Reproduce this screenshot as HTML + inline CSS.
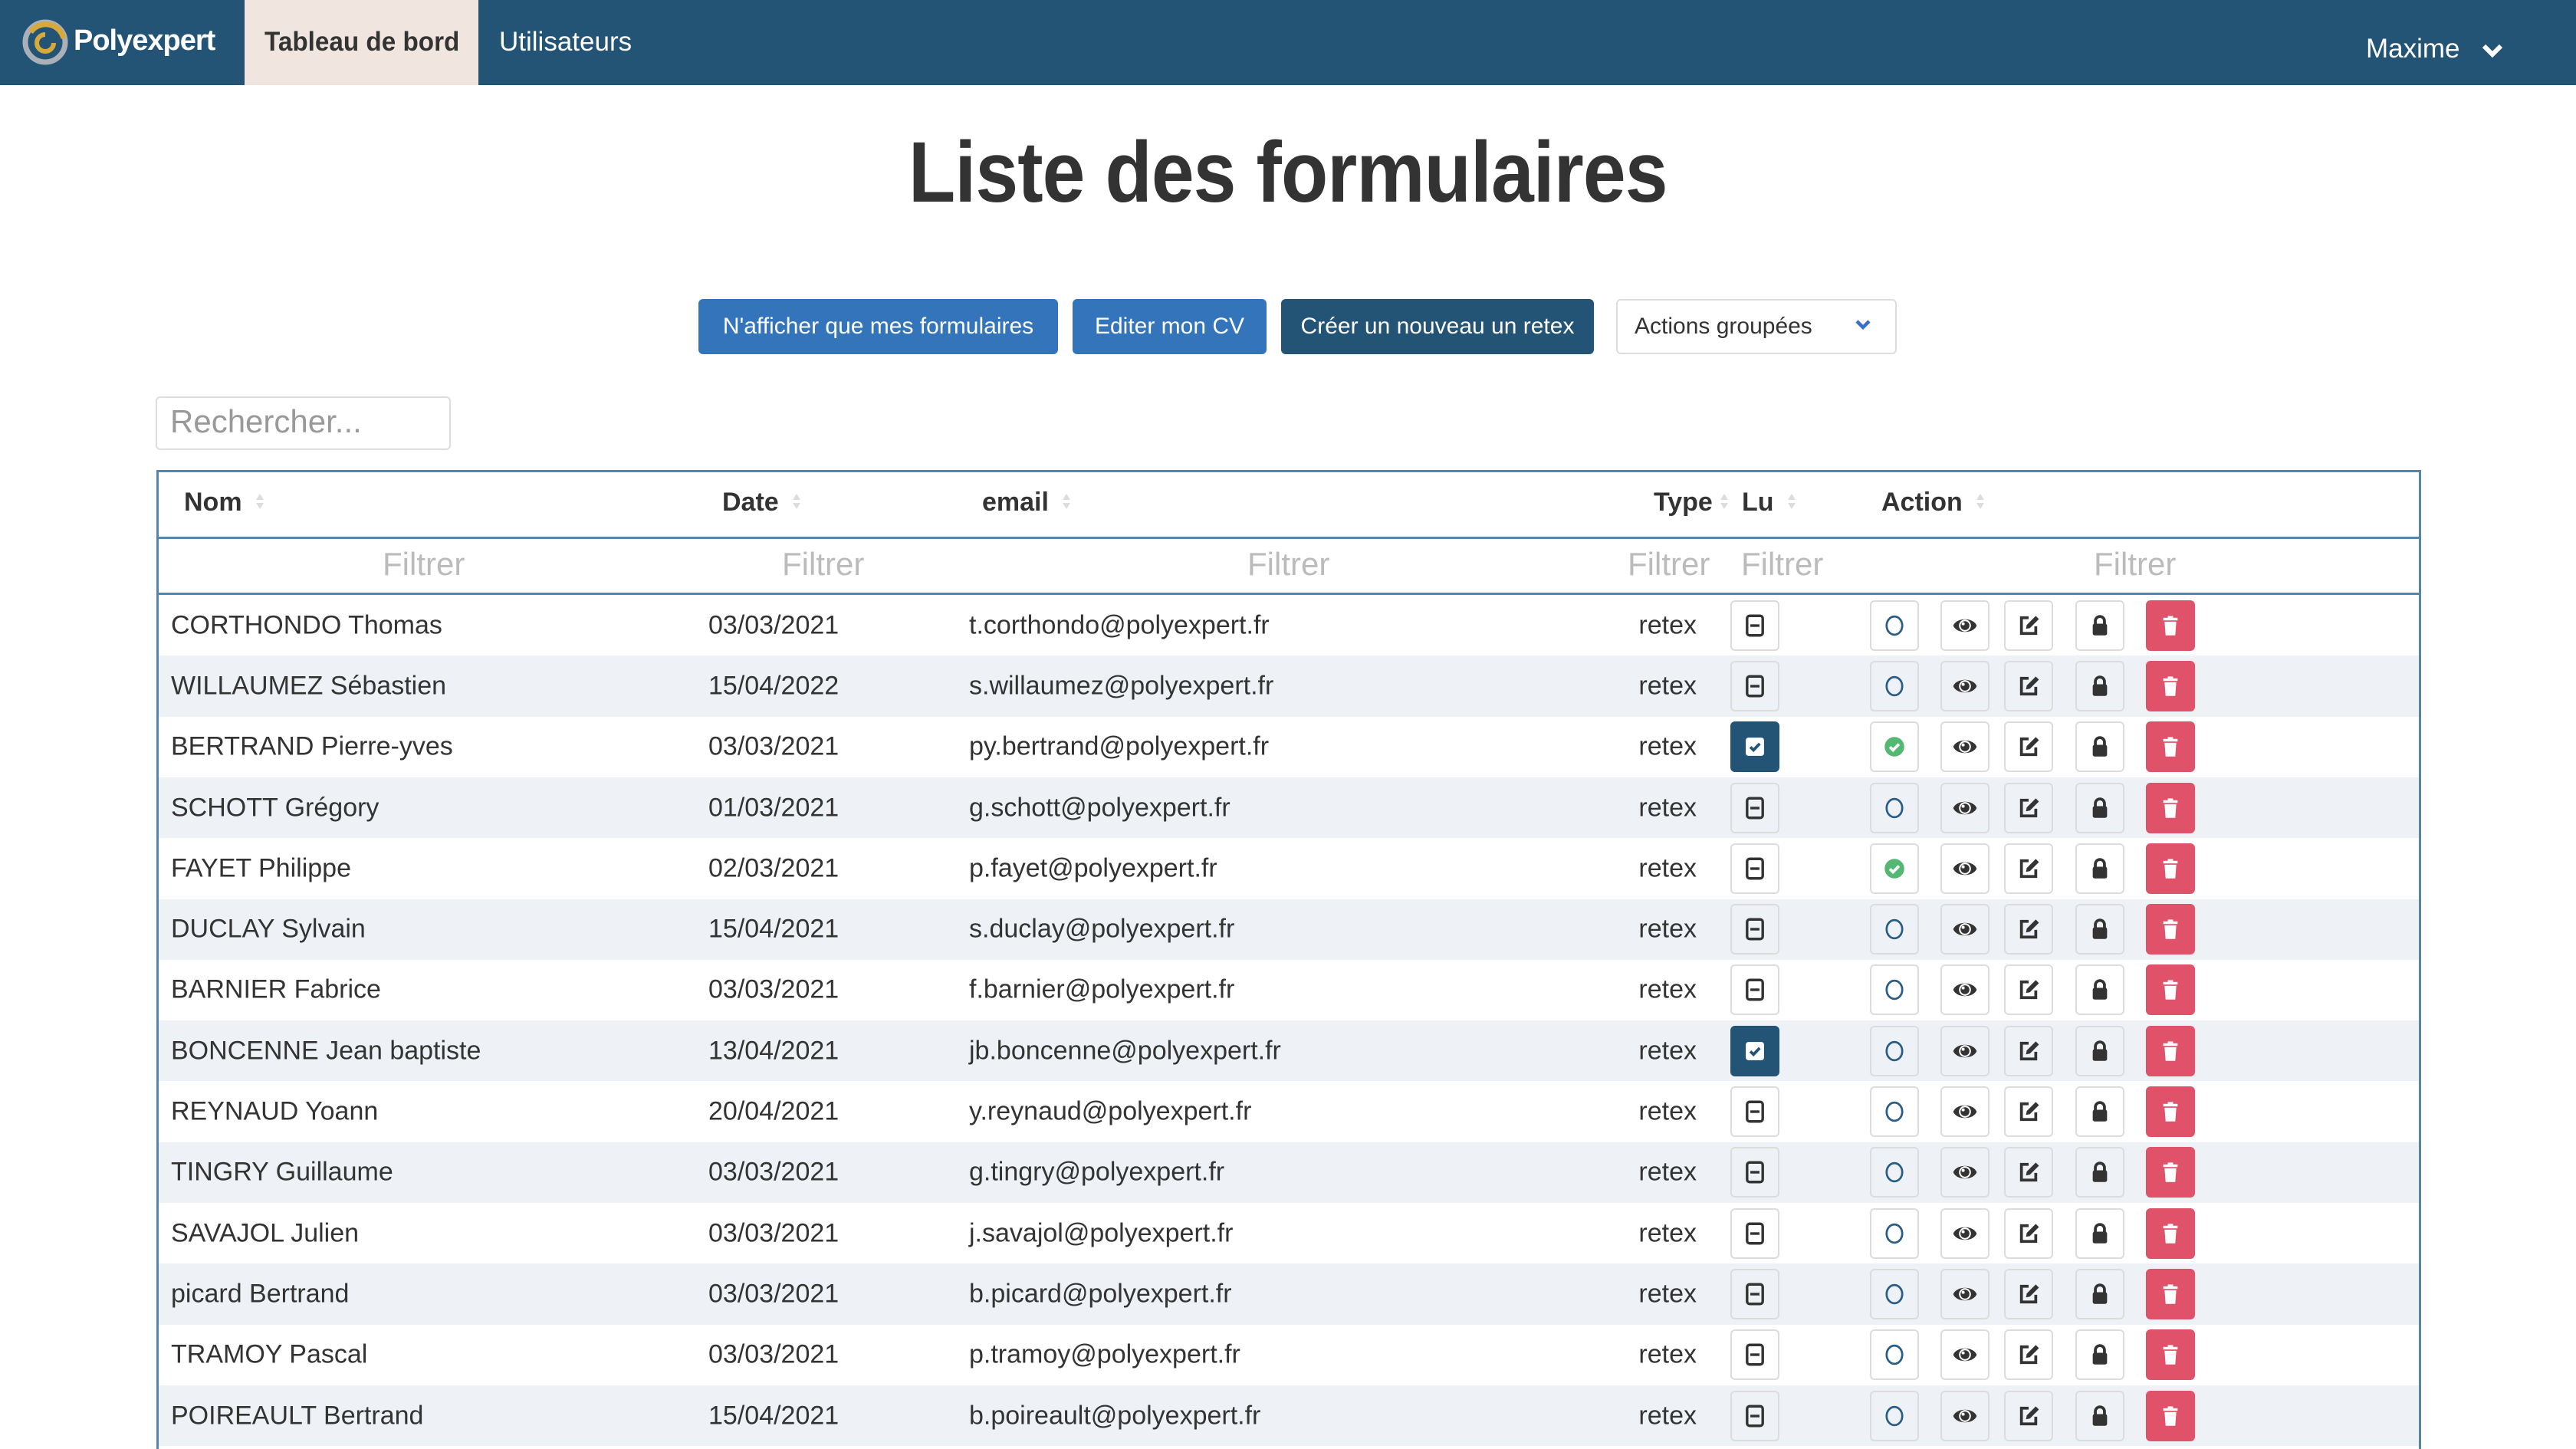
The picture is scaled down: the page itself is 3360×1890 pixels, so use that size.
<!DOCTYPE html>
<html style="overflow:hidden;width:3360px;height:1890px"><head><meta charset="utf-8">
<style>
*{box-sizing:border-box;margin:0;padding:0}
body{width:3360px;height:1890px;overflow:hidden;background:#fff;font-family:"Liberation Sans",Arial,sans-serif;color:#333;position:relative}
.nav{position:absolute;left:0;top:0;width:3360px;height:111px;background:#235476}
.abs{position:absolute;white-space:nowrap}
.btn{position:absolute;top:390px;height:72px;border-radius:6px;color:#fff;font-size:30px;display:flex;align-items:center;justify-content:center}
.tbl{position:absolute;left:204px;top:613px;width:2954px;height:1277px;border:3px solid #5585ab;border-bottom:none}
.row{position:absolute;left:207px;width:2948px;height:79.3px;font-size:34px}
.row.s{background:#eef2f6}
.row span{position:absolute;top:50%;transform:translateY(-50%);white-space:nowrap}
.b{position:absolute;top:50%;margin-top:-33px;width:64px;height:66px;border:2px solid #dcdcdc;border-radius:6px;display:flex;align-items:center;justify-content:center;background:transparent}
.b svg{width:34px;height:34px}
.b.d{background:#e0526a;border-color:#e0526a}
.b.k{background:#235476;border-color:#235476}
.hd{font-weight:bold;font-size:34px;position:absolute;top:636px;color:#333}
.ft{font-size:42px;color:#bbb;position:absolute;top:712px}
.sort{display:inline-block;width:14px;height:24px;margin-left:16px;vertical-align:middle;position:relative;top:-3px}
</style></head><body>
<svg width="0" height="0" style="position:absolute">
<defs>
<symbol id="mi" viewBox="0 0 20 20"><rect x="4" y="2.5" width="12" height="15" rx="2" fill="none" stroke="#333" stroke-width="2"/><rect x="6.5" y="9" width="7" height="2" fill="#333"/></symbol>
<symbol id="ck" viewBox="0 0 20 20"><rect x="3" y="3" width="14" height="14" rx="2" fill="#fff"/><path d="M6.5 10.2l2.4 2.4 4.8-5" fill="none" stroke="#235476" stroke-width="2.2"/></symbol>
<symbol id="ci" viewBox="0 0 20 20"><ellipse cx="10" cy="10" rx="6" ry="7" fill="none" stroke="#2a5d85" stroke-width="1.6"/></symbol>
<symbol id="gc" viewBox="0 0 20 20"><circle cx="10" cy="10" r="7.5" fill="#52b872"/><path d="M6.5 10.2l2.4 2.4 4.6-4.6" fill="none" stroke="#fff" stroke-width="2.2"/></symbol>
<symbol id="ey" viewBox="0 0 20 20"><path d="M1 10C3.5 3.5 16.5 3.5 19 10 16.5 16.5 3.5 16.5 1 10Z" fill="#333"/><circle cx="10" cy="10" r="4.6" fill="#fff"/><circle cx="10" cy="10" r="3.4" fill="#333"/><circle cx="8.6" cy="8.6" r="1.2" fill="#fff"/></symbol>
<symbol id="ed" viewBox="0 0 20 20"><path d="M10 4H4.5v12h11v-5.5" fill="none" stroke="#333" stroke-width="2.2"/><path d="M8 12.5l.6-3L15.5 2.6l2.4 2.4L11 11.9z" fill="#333"/></symbol>
<symbol id="lk" viewBox="0 0 20 20"><path d="M6.5 9V6.5a3.5 3.5 0 017 0V9" fill="none" stroke="#333" stroke-width="2.2"/><rect x="4.5" y="8.5" width="11" height="9" rx="1.5" fill="#333"/></symbol>
<symbol id="tr" viewBox="0 0 20 20"><rect x="4.5" y="4" width="11" height="2" fill="#fff"/><rect x="8" y="2.6" width="4" height="1.6" fill="#fff"/><path d="M5.5 7h9l-.8 10.5H6.3z" fill="#fff"/></symbol>
<symbol id="so" viewBox="0 0 14 24"><path d="M7 2l5 8H2z" fill="#ddd"/><path d="M7 22l5-8H2z" fill="#ddd"/></symbol>
</defs></svg>

<div class="nav"></div>
<svg class="abs" style="left:26px;top:22px" width="66" height="66" viewBox="0 0 66 66">
<circle cx="33" cy="33" r="26" fill="none" stroke="#aab0b8" stroke-width="7"/>
<path d="M14 20A24 24 0 0 1 57 28" fill="none" stroke="#d8a93a" stroke-width="7"/>
<path d="M44 34a11 11 0 1 1-11-11" fill="none" stroke="#d8a93a" stroke-width="6"/>
</svg>
<div class="abs" style="left:96px;top:32px;font-size:38px;font-weight:bold;color:#fff;letter-spacing:-1px">Polyexpert</div>
<div class="abs" style="left:319px;top:0;width:305px;height:111px;background:#f0e6df"></div>
<div class="abs" style="left:345px;top:35px;font-size:35px;font-weight:bold;color:#333;transform:scaleX(0.95);transform-origin:left">Tableau de bord</div>
<div class="abs" style="left:651px;top:35px;font-size:35px;color:#fff">Utilisateurs</div>
<div class="abs" style="left:3086px;top:44px;font-size:35px;color:#fff">Maxime</div>
<svg class="abs" style="left:3236px;top:56px" width="30" height="22" viewBox="0 0 30 22"><path d="M4 4l11 11 11-11" fill="none" stroke="#fff" stroke-width="6"/></svg>

<div class="abs" style="left:0;width:3360px;top:160px;text-align:center;font-size:112px;font-weight:bold;color:#333"><span style="display:inline-block;transform:scaleX(0.895);letter-spacing:-1px">Liste des formulaires</span></div>

<div class="btn" style="left:911px;width:469px;background:#3374bb">N'afficher que mes formulaires</div>
<div class="btn" style="left:1399px;width:253px;background:#3374bb">Editer mon CV</div>
<div class="btn" style="left:1671px;width:408px;background:#235476">Créer un nouveau un retex</div>
<div class="btn" style="left:2108px;width:366px;background:#fff;border:2px solid #ddd;color:#333;justify-content:flex-start;padding-left:22px">Actions groupées</div>
<svg class="abs" style="left:2418px;top:415px" width="24" height="18" viewBox="0 0 24 18"><path d="M4 4l8 8 8-8" fill="none" stroke="#3a6fd0" stroke-width="4.5"/></svg>

<div class="abs" style="left:203px;top:517px;width:385px;height:70px;border:2px solid #ddd;border-radius:6px"></div>
<div class="abs" style="left:222px;top:526px;font-size:42px;color:#999">Rechercher...</div>

<div class="tbl"></div>
<div class="abs" style="left:207px;top:700px;width:2948px;height:3px;background:#5585ab"></div>
<div class="abs" style="left:207px;top:773px;width:2948px;height:3px;background:#5585ab"></div>
<div class="hd" style="left:240px">Nom<svg class="sort"><use href="#so"/></svg></div>
<div class="hd" style="left:942px">Date<svg class="sort"><use href="#so"/></svg></div>
<div class="hd" style="left:1281px">email<svg class="sort"><use href="#so"/></svg></div>
<div class="hd" style="left:2157px">Type<svg class="sort" style="margin-left:8px"><use href="#so"/></svg></div>
<div class="hd" style="left:2272px">Lu<svg class="sort"><use href="#so"/></svg></div>
<div class="hd" style="left:2454px">Action<svg class="sort"><use href="#so"/></svg></div>
<div class="ft" style="left:499px">Filtrer</div>
<div class="ft" style="left:1020px">Filtrer</div>
<div class="ft" style="left:1627px">Filtrer</div>
<div class="ft" style="left:2123px">Filtrer</div>
<div class="ft" style="left:2271px">Filtrer</div>
<div class="ft" style="left:2731px">Filtrer</div>

<div id="rows">
<div class="row" style="top:776px"><span style="left:16px">CORTHONDO Thomas</span><span style="left:717px">03/03/2021</span><span style="left:1057px">t.corthondo@polyexpert.fr</span><span style="right:942px">retex</span><div class="b" style="left:2050px"><svg><use href="#mi" width="34" height="34"/></svg></div><div class="b" style="left:2232px"><svg><use href="#ci" width="34" height="34"/></svg></div><div class="b" style="left:2324px"><svg><use href="#ey" width="34" height="34"/></svg></div><div class="b" style="left:2407px"><svg><use href="#ed" width="34" height="34"/></svg></div><div class="b" style="left:2500px"><svg><use href="#lk" width="34" height="34"/></svg></div><div class="b d" style="left:2592px"><svg><use href="#tr" width="34" height="34"/></svg></div></div>
<div class="row s" style="top:855.3px"><span style="left:16px">WILLAUMEZ Sébastien</span><span style="left:717px">15/04/2022</span><span style="left:1057px">s.willaumez@polyexpert.fr</span><span style="right:942px">retex</span><div class="b" style="left:2050px"><svg><use href="#mi" width="34" height="34"/></svg></div><div class="b" style="left:2232px"><svg><use href="#ci" width="34" height="34"/></svg></div><div class="b" style="left:2324px"><svg><use href="#ey" width="34" height="34"/></svg></div><div class="b" style="left:2407px"><svg><use href="#ed" width="34" height="34"/></svg></div><div class="b" style="left:2500px"><svg><use href="#lk" width="34" height="34"/></svg></div><div class="b d" style="left:2592px"><svg><use href="#tr" width="34" height="34"/></svg></div></div>
<div class="row" style="top:934.6px"><span style="left:16px">BERTRAND Pierre-yves</span><span style="left:717px">03/03/2021</span><span style="left:1057px">py.bertrand@polyexpert.fr</span><span style="right:942px">retex</span><div class="b k" style="left:2050px"><svg><use href="#ck" width="34" height="34"/></svg></div><div class="b" style="left:2232px"><svg><use href="#gc" width="34" height="34"/></svg></div><div class="b" style="left:2324px"><svg><use href="#ey" width="34" height="34"/></svg></div><div class="b" style="left:2407px"><svg><use href="#ed" width="34" height="34"/></svg></div><div class="b" style="left:2500px"><svg><use href="#lk" width="34" height="34"/></svg></div><div class="b d" style="left:2592px"><svg><use href="#tr" width="34" height="34"/></svg></div></div>
<div class="row s" style="top:1013.9px"><span style="left:16px">SCHOTT Grégory</span><span style="left:717px">01/03/2021</span><span style="left:1057px">g.schott@polyexpert.fr</span><span style="right:942px">retex</span><div class="b" style="left:2050px"><svg><use href="#mi" width="34" height="34"/></svg></div><div class="b" style="left:2232px"><svg><use href="#ci" width="34" height="34"/></svg></div><div class="b" style="left:2324px"><svg><use href="#ey" width="34" height="34"/></svg></div><div class="b" style="left:2407px"><svg><use href="#ed" width="34" height="34"/></svg></div><div class="b" style="left:2500px"><svg><use href="#lk" width="34" height="34"/></svg></div><div class="b d" style="left:2592px"><svg><use href="#tr" width="34" height="34"/></svg></div></div>
<div class="row" style="top:1093.2px"><span style="left:16px">FAYET Philippe</span><span style="left:717px">02/03/2021</span><span style="left:1057px">p.fayet@polyexpert.fr</span><span style="right:942px">retex</span><div class="b" style="left:2050px"><svg><use href="#mi" width="34" height="34"/></svg></div><div class="b" style="left:2232px"><svg><use href="#gc" width="34" height="34"/></svg></div><div class="b" style="left:2324px"><svg><use href="#ey" width="34" height="34"/></svg></div><div class="b" style="left:2407px"><svg><use href="#ed" width="34" height="34"/></svg></div><div class="b" style="left:2500px"><svg><use href="#lk" width="34" height="34"/></svg></div><div class="b d" style="left:2592px"><svg><use href="#tr" width="34" height="34"/></svg></div></div>
<div class="row s" style="top:1172.5px"><span style="left:16px">DUCLAY Sylvain</span><span style="left:717px">15/04/2021</span><span style="left:1057px">s.duclay@polyexpert.fr</span><span style="right:942px">retex</span><div class="b" style="left:2050px"><svg><use href="#mi" width="34" height="34"/></svg></div><div class="b" style="left:2232px"><svg><use href="#ci" width="34" height="34"/></svg></div><div class="b" style="left:2324px"><svg><use href="#ey" width="34" height="34"/></svg></div><div class="b" style="left:2407px"><svg><use href="#ed" width="34" height="34"/></svg></div><div class="b" style="left:2500px"><svg><use href="#lk" width="34" height="34"/></svg></div><div class="b d" style="left:2592px"><svg><use href="#tr" width="34" height="34"/></svg></div></div>
<div class="row" style="top:1251.8px"><span style="left:16px">BARNIER Fabrice</span><span style="left:717px">03/03/2021</span><span style="left:1057px">f.barnier@polyexpert.fr</span><span style="right:942px">retex</span><div class="b" style="left:2050px"><svg><use href="#mi" width="34" height="34"/></svg></div><div class="b" style="left:2232px"><svg><use href="#ci" width="34" height="34"/></svg></div><div class="b" style="left:2324px"><svg><use href="#ey" width="34" height="34"/></svg></div><div class="b" style="left:2407px"><svg><use href="#ed" width="34" height="34"/></svg></div><div class="b" style="left:2500px"><svg><use href="#lk" width="34" height="34"/></svg></div><div class="b d" style="left:2592px"><svg><use href="#tr" width="34" height="34"/></svg></div></div>
<div class="row s" style="top:1331.1px"><span style="left:16px">BONCENNE Jean baptiste</span><span style="left:717px">13/04/2021</span><span style="left:1057px">jb.boncenne@polyexpert.fr</span><span style="right:942px">retex</span><div class="b k" style="left:2050px"><svg><use href="#ck" width="34" height="34"/></svg></div><div class="b" style="left:2232px"><svg><use href="#ci" width="34" height="34"/></svg></div><div class="b" style="left:2324px"><svg><use href="#ey" width="34" height="34"/></svg></div><div class="b" style="left:2407px"><svg><use href="#ed" width="34" height="34"/></svg></div><div class="b" style="left:2500px"><svg><use href="#lk" width="34" height="34"/></svg></div><div class="b d" style="left:2592px"><svg><use href="#tr" width="34" height="34"/></svg></div></div>
<div class="row" style="top:1410.4px"><span style="left:16px">REYNAUD Yoann</span><span style="left:717px">20/04/2021</span><span style="left:1057px">y.reynaud@polyexpert.fr</span><span style="right:942px">retex</span><div class="b" style="left:2050px"><svg><use href="#mi" width="34" height="34"/></svg></div><div class="b" style="left:2232px"><svg><use href="#ci" width="34" height="34"/></svg></div><div class="b" style="left:2324px"><svg><use href="#ey" width="34" height="34"/></svg></div><div class="b" style="left:2407px"><svg><use href="#ed" width="34" height="34"/></svg></div><div class="b" style="left:2500px"><svg><use href="#lk" width="34" height="34"/></svg></div><div class="b d" style="left:2592px"><svg><use href="#tr" width="34" height="34"/></svg></div></div>
<div class="row s" style="top:1489.7px"><span style="left:16px">TINGRY Guillaume</span><span style="left:717px">03/03/2021</span><span style="left:1057px">g.tingry@polyexpert.fr</span><span style="right:942px">retex</span><div class="b" style="left:2050px"><svg><use href="#mi" width="34" height="34"/></svg></div><div class="b" style="left:2232px"><svg><use href="#ci" width="34" height="34"/></svg></div><div class="b" style="left:2324px"><svg><use href="#ey" width="34" height="34"/></svg></div><div class="b" style="left:2407px"><svg><use href="#ed" width="34" height="34"/></svg></div><div class="b" style="left:2500px"><svg><use href="#lk" width="34" height="34"/></svg></div><div class="b d" style="left:2592px"><svg><use href="#tr" width="34" height="34"/></svg></div></div>
<div class="row" style="top:1569px"><span style="left:16px">SAVAJOL Julien</span><span style="left:717px">03/03/2021</span><span style="left:1057px">j.savajol@polyexpert.fr</span><span style="right:942px">retex</span><div class="b" style="left:2050px"><svg><use href="#mi" width="34" height="34"/></svg></div><div class="b" style="left:2232px"><svg><use href="#ci" width="34" height="34"/></svg></div><div class="b" style="left:2324px"><svg><use href="#ey" width="34" height="34"/></svg></div><div class="b" style="left:2407px"><svg><use href="#ed" width="34" height="34"/></svg></div><div class="b" style="left:2500px"><svg><use href="#lk" width="34" height="34"/></svg></div><div class="b d" style="left:2592px"><svg><use href="#tr" width="34" height="34"/></svg></div></div>
<div class="row s" style="top:1648.3px"><span style="left:16px">picard Bertrand</span><span style="left:717px">03/03/2021</span><span style="left:1057px">b.picard@polyexpert.fr</span><span style="right:942px">retex</span><div class="b" style="left:2050px"><svg><use href="#mi" width="34" height="34"/></svg></div><div class="b" style="left:2232px"><svg><use href="#ci" width="34" height="34"/></svg></div><div class="b" style="left:2324px"><svg><use href="#ey" width="34" height="34"/></svg></div><div class="b" style="left:2407px"><svg><use href="#ed" width="34" height="34"/></svg></div><div class="b" style="left:2500px"><svg><use href="#lk" width="34" height="34"/></svg></div><div class="b d" style="left:2592px"><svg><use href="#tr" width="34" height="34"/></svg></div></div>
<div class="row" style="top:1727.6px"><span style="left:16px">TRAMOY Pascal</span><span style="left:717px">03/03/2021</span><span style="left:1057px">p.tramoy@polyexpert.fr</span><span style="right:942px">retex</span><div class="b" style="left:2050px"><svg><use href="#mi" width="34" height="34"/></svg></div><div class="b" style="left:2232px"><svg><use href="#ci" width="34" height="34"/></svg></div><div class="b" style="left:2324px"><svg><use href="#ey" width="34" height="34"/></svg></div><div class="b" style="left:2407px"><svg><use href="#ed" width="34" height="34"/></svg></div><div class="b" style="left:2500px"><svg><use href="#lk" width="34" height="34"/></svg></div><div class="b d" style="left:2592px"><svg><use href="#tr" width="34" height="34"/></svg></div></div>
<div class="row s" style="top:1806.9px"><span style="left:16px">POIREAULT Bertrand</span><span style="left:717px">15/04/2021</span><span style="left:1057px">b.poireault@polyexpert.fr</span><span style="right:942px">retex</span><div class="b" style="left:2050px"><svg><use href="#mi" width="34" height="34"/></svg></div><div class="b" style="left:2232px"><svg><use href="#ci" width="34" height="34"/></svg></div><div class="b" style="left:2324px"><svg><use href="#ey" width="34" height="34"/></svg></div><div class="b" style="left:2407px"><svg><use href="#ed" width="34" height="34"/></svg></div><div class="b" style="left:2500px"><svg><use href="#lk" width="34" height="34"/></svg></div><div class="b d" style="left:2592px"><svg><use href="#tr" width="34" height="34"/></svg></div></div>
</div>
</body></html>
